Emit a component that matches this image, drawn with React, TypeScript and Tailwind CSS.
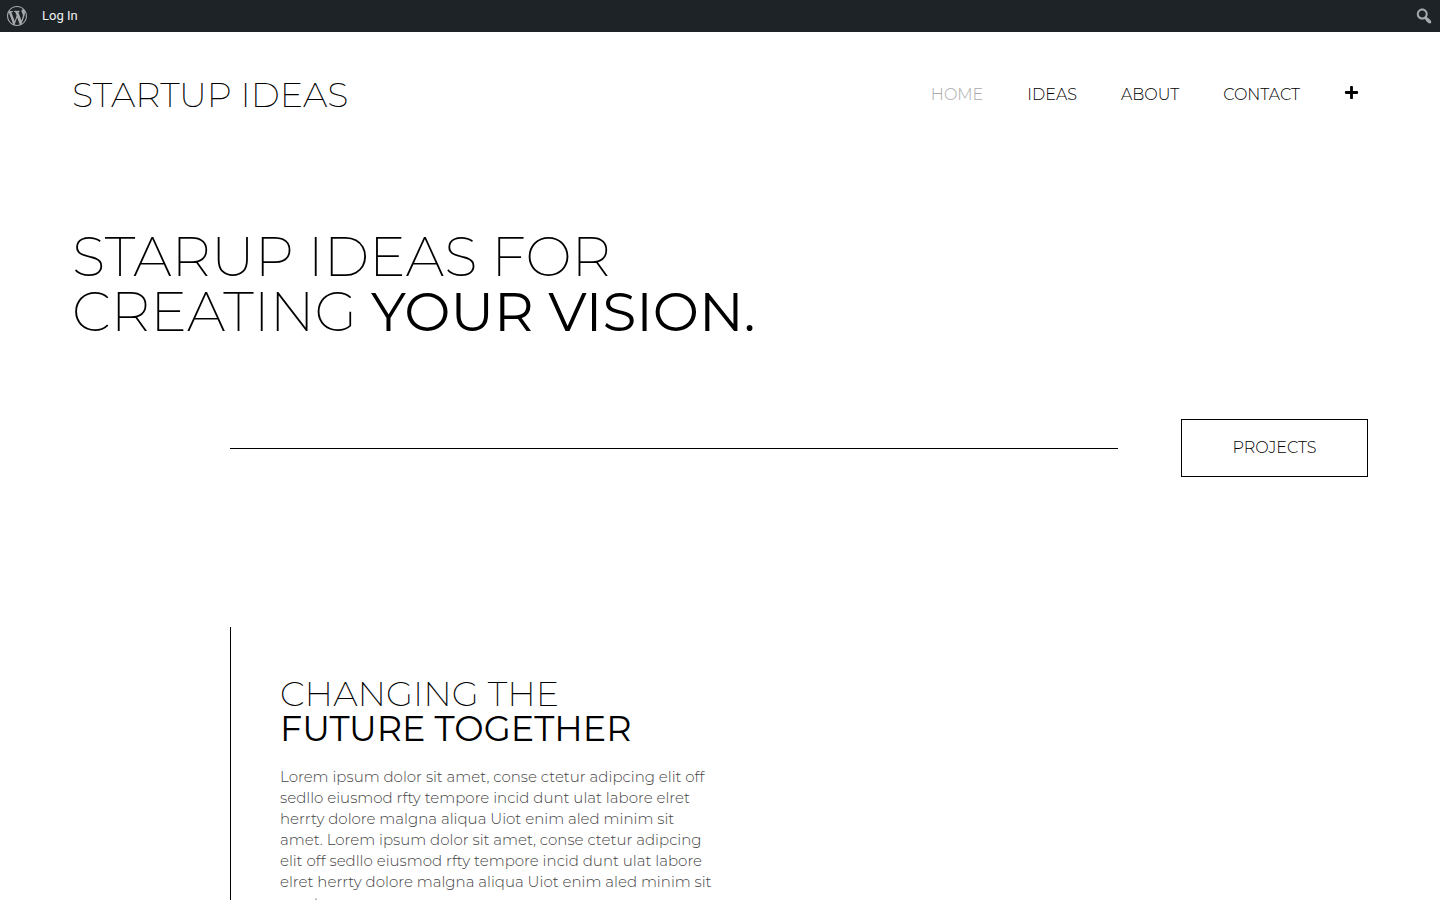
import { FaPlus } from 'react-icons/fa';

interface NavItem {
  label: string;
  href: string;
  active?: boolean;
}

const navItems: NavItem[] = [
  { label: 'HOME', href: '#home', active: true },
  { label: 'IDEAS', href: '#ideas' },
  { label: 'ABOUT', href: '#about' },
  { label: 'CONTACT', href: '#contact' },
];

const introLines = [
  'Lorem ipsum dolor sit amet, conse ctetur adipcing elit off',
  'sedllo eiusmod rfty tempore incid dunt ulat labore elret',
  'herrty dolore malgna aliqua Uiot enim aled minim sit',
  'amet. Lorem ipsum dolor sit amet, conse ctetur adipcing',
  'elit off sedllo eiusmod rfty tempore incid dunt ulat labore',
  'elret herrty dolore malgna aliqua Uiot enim aled minim sit',
  'amet.',
];

function WordPressIcon() {
  return (
    <svg viewBox="0 0 20 20" className="h-5 w-5" fill="currentColor" aria-hidden="true">
      <path d="M20 10c0-5.51-4.49-10-10-10C4.48 0 0 4.49 0 10c0 5.52 4.48 10 10 10 5.51 0 10-4.48 10-10zM7.78 15.37L4.37 6.22c.55-.02 1.17-.08 1.17-.08.5-.06.44-1.13-.06-1.11 0 0-1.45.11-2.37.11-.18 0-.37 0-.58-.01C4.12 2.69 6.87 1.11 10 1.11c2.33 0 4.45.87 6.05 2.34-.68-.11-1.65.39-1.65 1.58 0 .74.45 1.36.9 2.1.35.61.55 1.36.55 2.46 0 1.49-1.4 5-1.4 5l-3.03-8.37c.54-.02.82-.17.82-.17.5-.05.44-1.25-.06-1.22 0 0-1.44.12-2.38.12-.87 0-2.33-.12-2.33-.12-.5-.03-.56 1.2-.06 1.22l.92.08 1.26 3.41zM17.41 10c.24-.64.74-1.87.43-4.25.7 1.29 1.05 2.71 1.05 4.25 0 3.29-1.73 6.24-4.4 7.78.97-2.59 1.94-5.2 2.92-7.78zM6.1 18.09C3.12 16.65 1.11 13.53 1.11 10c0-1.3.23-2.48.72-3.59C3.25 10.3 4.67 14.2 6.1 18.09zm4.03-6.63l2.58 6.98c-.86.29-1.76.45-2.71.45-.79 0-1.57-.11-2.29-.33.81-2.38 1.62-4.74 2.42-7.1z" />
    </svg>
  );
}

function SearchIcon() {
  return (
    <svg viewBox="0 0 20 20" className="h-5 w-5" fill="currentColor" aria-hidden="true">
      <path d="M12.14 4.18c1.87 1.87 2.11 4.75.72 6.89.12.1.22.21.36.31.2.16.47.36.81.59.34.24.56.39.66.47.42.31.73.57.94.78.32.32.6.65.84 1 .25.35.44.69.59 1.04.14.35.21.68.18 1-.02.32-.14.59-.36.81s-.49.34-.81.36c-.31.02-.65-.04-.99-.19-.35-.14-.7-.34-1.04-.59-.35-.24-.68-.52-1-.84-.21-.21-.47-.52-.77-.93-.1-.13-.25-.35-.47-.66-.22-.32-.4-.57-.56-.78-.16-.2-.29-.35-.44-.5-2.07 1.09-4.69.76-6.44-.98-2.14-2.15-2.14-5.64 0-7.78 2.15-2.15 5.63-2.15 7.78 0zm-1.41 6.36c1.36-1.37 1.36-3.58 0-4.95-1.37-1.37-3.59-1.37-4.95 0-1.37 1.37-1.37 3.58 0 4.95 1.36 1.37 3.58 1.37 4.95 0z" />
    </svg>
  );
}

function AdminBar() {
  return (
    <div className="flex h-8 items-center justify-between bg-[#1d2327] pr-[6px] pl-[7px] font-[Roboto,sans-serif] text-[13px] text-[#f0f0f1]">
      <div className="flex items-center gap-[15px]">
        <a href="#wordpress" aria-label="About WordPress" className="text-[#a7aaad]">
          <WordPressIcon />
        </a>
        <a href="#login">Log In</a>
      </div>
      <button type="button" aria-label="Search" className="text-[#a7aaad]">
        <SearchIcon />
      </button>
    </div>
  );
}

function Header() {
  return (
    <header className="flex items-start justify-between pt-[45px]">
      <a href="#home" className="text-[35px] leading-9 font-extralight">
        STARTUP IDEAS
      </a>
      <nav className="flex items-center gap-11 pr-[9px] text-[16px] leading-9 font-light">
        {navItems.map((item) => (
          <a key={item.label} href={item.href} className={item.active ? 'text-[#aaaaaa]' : 'text-black'}>
            {item.label}
          </a>
        ))}
        <button type="button" aria-label="More" className="pb-[6px]">
          <FaPlus className="h-[15px] w-[15px]" />
        </button>
      </nav>
    </header>
  );
}

export default function App() {
  return (
    <div className="min-h-screen bg-white font-[Montserrat,Inter,sans-serif] text-black">
      <AdminBar />
      <div className="mx-auto w-9/10">
        <Header />

        <main>
          <h1 className="pt-[116px] text-[55px] leading-[55px] font-extralight">
            STARUP IDEAS FOR
            <br />
            CREATING <strong className="font-normal">YOUR VISION.</strong>
          </h1>

          <div className="mt-20 flex items-center gap-[63px] pl-[158px]">
            <hr className="grow border-black" />
            <a
              href="#projects"
              className="flex h-[58px] w-[187px] items-center justify-center border border-black text-[16px] font-light"
            >
              PROJECTS
            </a>
          </div>

          <section className="mt-[150px] ml-[158px] border-l border-black pt-[49px] pb-12 pl-[49px]">
            <h2 className="text-[35px] leading-[35px] font-extralight">
              CHANGING THE
              <br />
              <strong className="font-normal">FUTURE TOGETHER</strong>
            </h2>
            <p className="mt-5 text-[15px] leading-[21px] font-light text-[#444444]">
              {introLines.map((line) => (
                <span key={line} className="block">
                  {line}
                </span>
              ))}
            </p>
          </section>
        </main>
      </div>
    </div>
  );
}
